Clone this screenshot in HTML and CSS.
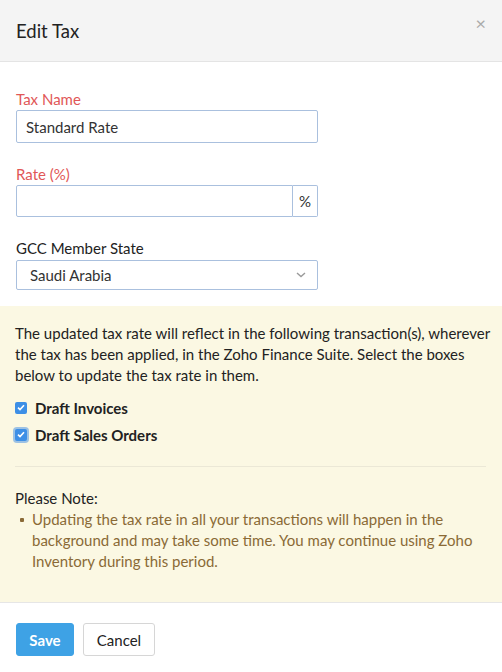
FILE: index.html
```html
<!DOCTYPE html>
<html lang="en">
<head>
    <meta charset="UTF-8">
    <meta name="viewport" content="width=device-width, initial-scale=1.0">
    <title>Edit Tax</title>
    <link rel="stylesheet" href="styles.css">
</head>
<body>
<div class="modal">
    <!-- Cabeçalho -->
    <div class="modal-header">
        <h4 class="modal-title">Edit Tax</h4>
        <span class="close">&times;</span>
    </div>

    <!-- Formulário -->
    <div class="modal-body">
        <div class="form-group">
            <label class="required">Tax Name</label>
            <input class="form-control" type="text" value="Standard Rate">
        </div>
        <div class="form-group">
            <label class="required">Rate (%)</label>
            <div class="input-group">
                <input class="form-control" type="text" value="">
                <span class="input-addon">%</span>
            </div>
        </div>
        <div class="form-group">
            <label>GCC Member State</label>
            <div class="select-box">
                <span>Saudi Arabia</span>
                <svg width="10" height="6" viewBox="0 0 10 6"><path d="M1 1l4 3.6L9 1" fill="none" stroke="#9a9a9a" stroke-width="1.4"/></svg>
            </div>
        </div>
    </div>

    <!-- Aviso amarelo -->
    <div class="notice">
        <p>The updated tax rate will reflect in the following transaction(s), wherever the tax has been applied, in the Zoho Finance Suite. Select the boxes below to update the tax rate in them.</p>
        <div class="check-row">
            <span class="check"><svg width="8" height="7" viewBox="0 0 8 7"><path d="M1 3.6l2 2L7 1.2" fill="none" stroke="#fff" stroke-width="1.6"/></svg></span>
            <span class="check-label">Draft Invoices</span>
        </div>
        <div class="check-row">
            <span class="check focused"><svg width="8" height="7" viewBox="0 0 8 7"><path d="M1 3.6l2 2L7 1.2" fill="none" stroke="#fff" stroke-width="1.6"/></svg></span>
            <span class="check-label">Draft Sales Orders</span>
        </div>
        <hr class="divider">
        <div class="note-title">Please Note:</div>
        <ul class="note-list">
            <li>Updating the tax rate in all your transactions will happen in the background and may take some time. You may continue using Zoho Inventory during this period.</li>
        </ul>
    </div>

    <!-- Rodapé -->
    <div class="modal-footer">
        <button class="btn btn-primary">Save</button>
        <button class="btn btn-default">Cancel</button>
    </div>
</div>
</body>
</html>
```

FILE: styles.css
```css
body {
    margin: 0;
    padding: 0;
    font-family: Lato, "Open Sans", sans-serif;
    font-size: 15px;
    color: #222;
    background-color: #fff;
}

.modal {
    width: 502px;
}

.modal-header {
    height: 62px;
    background-color: #f4f4f4;
    border-bottom: 1px solid #e4e4e4;
    display: flex;
    align-items: center;
    justify-content: space-between;
    padding: 0 16px;
    box-sizing: border-box;
}

.modal-title {
    margin: 0;
    font-size: 18.5px;
    font-weight: normal;
    color: #222;
}

.close {
    font-size: 18px;
    color: #aaa;
    margin-top: -16px;
    margin-right: 0;
}

.modal-body {
    padding: 27px 16px 16px;
}

.form-group {
    width: 302px;
    margin-bottom: 21px;
}

.form-group:last-child {
    margin-bottom: 0;
}

label {
    display: block;
    line-height: 21px;
    margin-bottom: 0;
    color: #222;
}

label.required {
    color: #e15757;
}

.form-control {
    display: block;
    width: 100%;
    height: 33px;
    box-sizing: border-box;
    border: 1px solid #aac0de;
    border-radius: 2px;
    padding: 0 9px;
    font-family: inherit;
    font-size: 15px;
    color: #333;
    outline: none;
}

.input-group {
    display: flex;
}

.input-group .form-control {
    height: 32px;
    border-radius: 2px 0 0 2px;
}

.input-addon {
    width: 24px;
    flex-shrink: 0;
    border: 1px solid #aac0de;
    border-left: none;
    border-radius: 0 2px 2px 0;
    display: flex;
    align-items: center;
    justify-content: center;
    color: #333;
}

.select-box {
    height: 28px;
    margin-top: 1px;
    border: 1px solid #aac0de;
    border-radius: 2px;
    display: flex;
    align-items: center;
    justify-content: space-between;
    padding: 0 11px 0 13px;
    color: #333;
}

/* Bloco amarelo */
.notice {
    background-color: #fbf8e3;
    padding: 17px 12px 30px 15px;
    border-bottom: 1px solid #e6e6e6;
}

.notice p {
    margin: 0 0 11px;
    line-height: 21px;
    color: #222;
}

.check-row {
    display: flex;
    align-items: center;
    gap: 8px;
    height: 21px;
    margin-bottom: 6px;
}

.check {
    width: 12px;
    height: 12px;
    border-radius: 2px;
    background-color: #3d8fe6;
    display: flex;
    align-items: center;
    justify-content: center;
}

.check.focused {
    box-shadow: 0 0 0 2px rgba(80, 150, 230, 0.55);
}

.check-label {
    font-weight: bold;
    color: #222;
}

.divider {
    border: none;
    border-top: 1px solid #ebe8d6;
    margin: 21px 4px 21px 0;
}

.note-title {
    line-height: 21px;
    color: #222;
}

.note-list {
    margin: 0;
    padding: 0 0 0 17px;
    list-style: none;
    color: #8a6a36;
}

.note-list li {
    position: relative;
    line-height: 21px;
}

.note-list li::before {
    content: "";
    position: absolute;
    left: -12px;
    top: 9px;
    width: 4px;
    height: 4px;
    background-color: #8a6a36;
    border-radius: 1px;
}

/* Rodapé */
.modal-footer {
    padding: 20px 16px;
    display: flex;
    gap: 9px;
}

.btn {
    height: 33px;
    border-radius: 3px;
    font-family: inherit;
    font-size: 15px;
    padding: 0 12px;
    cursor: pointer;
}

.btn-primary {
    background-color: #3ea2e5;
    border: 1px solid #3ea2e5;
    color: #fff;
    font-weight: bold;
    width: 58px;
}

.btn-default {
    background-color: #fff;
    border: 1px solid #d6d6d6;
    color: #222;
    width: 72px;
}
```
